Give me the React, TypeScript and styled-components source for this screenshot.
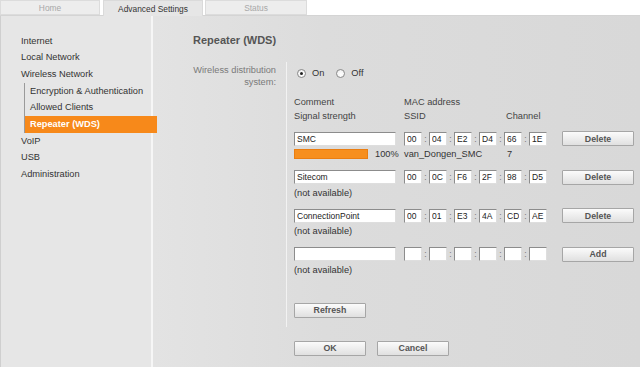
import React from 'react';
import styled, { createGlobalStyle } from 'styled-components';

const Global = createGlobalStyle`
  html, body { margin: 0; padding: 0; background: #fff; }
  body { font-family: "Liberation Sans", Arial, Helvetica, sans-serif; overflow: hidden; }
  * { box-sizing: border-box; }
`;

const Page = styled.div`
  width: 640px;
  height: 367px;
  display: flex;
  flex-direction: column;
  background: #fff;
`;

const TabBar = styled.div`
  height: 16px;
  display: flex;
  border-bottom: 1px solid #d4d4d4;
  flex-shrink: 0;
`;

const Tab = styled.div<{ $active?: boolean; $w: number; $gap: number }>`
  width: ${p => p.$w}px;
  margin-left: ${p => p.$gap}px;
  height: ${p => (p.$active ? 16 : 15)}px;
  margin-bottom: ${p => (p.$active ? -1 : 0)}px;
  display: flex;
  align-items: center;
  justify-content: center;
  font-size: 8.4px;
  color: ${p => (p.$active ? '#333' : '#a8a8a8')};
  background: ${p => (p.$active ? '#e6e6e6' : '#ededed')};
  border: 1px solid ${p => (p.$active ? '#dadada' : '#dcdcdc')};
  border-bottom: ${p => (p.$active ? 'none' : '1px solid #dcdcdc')};
  padding-top: 1px;
`;

const Body = styled.div`
  flex: 1;
  display: flex;
  min-height: 0;
`;

const Sidebar = styled.nav`
  width: 153px;
  flex-shrink: 0;
  background: #e6e6e6;
  border-left: 1px solid #cfcfcf;
  border-right: 2px solid #f6f6f6;
  padding-top: 16.6px;
  font-size: 9.25px;
  color: #333;
`;

const NavItem = styled.div`
  height: 16.7px;
  line-height: 16.7px;
  padding-left: 20px;
`;

const SubGroup = styled.div`
  margin-left: 23px;
  border-left: 1px solid #9a9a9a;
`;

const SubItem = styled.div<{ $active?: boolean }>`
  height: 16.7px;
  line-height: 16.7px;
  padding-left: 5px;
  ${p =>
    p.$active
      ? `
    position: relative;
    z-index: 1;
    margin-right: -6px;
    background: #f7891a;
    color: #fff;
    font-weight: bold;
  `
      : ''}
`;

const Main = styled.main`
  flex: 1;
  background: linear-gradient(to right, #e3e3e3 0%, #dcdcdc 35%, #d8d8d8 100%);
  padding: 17px 0 0 40px;
  font-size: 9.25px;
`;

const Title = styled.h1`
  margin: 0;
  font-size: 11px;
  line-height: 14px;
  font-weight: bold;
  color: #555;
`;

const Form = styled.div`
  display: flex;
  margin-top: 15px;
`;

const FieldLabel = styled.div`
  width: 83px;
  text-align: right;
  padding-top: 3.3px;
  line-height: 11.5px;
  color: #7a7a7a;
`;

const Content = styled.div`
  margin-left: 10px;
  border-left: 1px solid #f2f2f2;
  padding-left: 7px;
  padding-bottom: 9px;
`;

const RadioRow = styled.div`
  height: 22px;
  display: flex;
  align-items: center;
  padding-left: 3px;
  color: #333;
`;

const RadioOpt = styled.label`
  display: flex;
  align-items: center;
  gap: 6px;
  margin-right: 12px;
`;

const RadioCircle = styled.span<{ $on?: boolean }>`
  width: 9px;
  height: 9px;
  border-radius: 50%;
  border: 1px solid #8a8a8a;
  background: radial-gradient(circle at 60% 65%, #ffffff 0%, #f4f4f4 60%, #d8d8d8 100%);
  display: flex;
  align-items: center;
  justify-content: center;
  &::after {
    content: '';
    width: 3px;
    height: 3px;
    border-radius: 50%;
    background: ${p => (p.$on ? '#222' : 'transparent')};
  }
`;

const Grid = styled.div`
  display: grid;
  grid-template-columns: 110px 102px 56px 72px;
  align-items: center;
`;

const HeaderLine = styled(Grid)`
  height: 14px;
  color: #444;
`;

const Headers = styled.div`
  margin-top: 11px;
`;

const Entries = styled.div`
  margin-top: 8px;
  display: flex;
  flex-direction: column;
  gap: 8.67px;
`;

const InputLine = styled(Grid)`
  height: 15px;
`;

const InfoLine = styled(Grid)`
  height: 14px;
  margin-top: 1px;
  color: #333;
`;

const Span2 = styled.div`
  grid-column: 2 / span 2;
`;

const TextField = styled.input`
  width: 102px;
  height: 14px;
  border: 1px solid;
  border-color: #8c8c8c #dedede #dedede #8c8c8c;
  background: #fff;
  padding: 0 2px;
  font-family: inherit;
  font-size: 8.5px;
  color: #222;
  outline: none;
  display: block;
`;

const MacGroup = styled.div`
  display: flex;
  align-items: center;
`;

const MacField = styled(TextField)`
  width: 18px;
`;

const Colon = styled.span`
  width: 7px;
  text-align: center;
  color: #777;
  font-size: 8.5px;
`;

const Button = styled.button`
  width: 72px;
  height: 15px;
  padding: 0;
  border: 1px solid #a6a6a6;
  border-radius: 1px;
  background: linear-gradient(#fbfbfb, #e0e0e0);
  font-family: inherit;
  font-size: 8.8px;
  font-weight: bold;
  color: #555;
  display: block;
`;

const Signal = styled.div`
  display: flex;
  align-items: center;
`;

const Bar = styled.div`
  width: 74px;
  height: 10px;
  background: #f78f1e;
  border: 1px solid #ea7e12;
`;

const Percent = styled.span`
  margin-left: 7px;
`;

const Channel = styled.div`
  padding-left: 1px;
`;

const RefreshRow = styled.div`
  margin-top: 26px;
`;

const ActionRow = styled.div`
  display: flex;
  gap: 11px;
  margin: 14px 0 0 101px;
`;

type Entry = {
  comment: string;
  mac: string[];
  signal?: number;
  ssid?: string;
  channel?: string;
  action: string;
};

const entries: Entry[] = [
  { comment: 'SMC', mac: ['00', '04', 'E2', 'D4', '66', '1E'], signal: 100, ssid: 'van_Dongen_SMC', channel: '7', action: 'Delete' },
  { comment: 'Sitecom', mac: ['00', '0C', 'F6', '2F', '98', 'D5'], action: 'Delete' },
  { comment: 'ConnectionPoint', mac: ['00', '01', 'E3', '4A', 'CD', 'AE'], action: 'Delete' },
  { comment: '', mac: ['', '', '', '', '', ''], action: 'Add' },
];

function MacInputs({ mac }: { mac: string[] }) {
  return (
    <MacGroup>
      {mac.map((m, i) => (
        <React.Fragment key={i}>
          {i > 0 && <Colon>:</Colon>}
          <MacField defaultValue={m} />
        </React.Fragment>
      ))}
    </MacGroup>
  );
}

export default function App() {
  return (
    <Page>
      <Global />
      <TabBar>
        <Tab $w={100} $gap={0}>Home</Tab>
        <Tab $w={100} $gap={3} $active>Advanced Settings</Tab>
        <Tab $w={102} $gap={2}>Status</Tab>
      </TabBar>
      <Body>
        <Sidebar>
          <NavItem>Internet</NavItem>
          <NavItem>Local Network</NavItem>
          <NavItem>Wireless Network</NavItem>
          <SubGroup>
            <SubItem>Encryption &amp; Authentication</SubItem>
            <SubItem>Allowed Clients</SubItem>
            <SubItem $active>Repeater (WDS)</SubItem>
          </SubGroup>
          <NavItem>VoIP</NavItem>
          <NavItem>USB</NavItem>
          <NavItem>Administration</NavItem>
        </Sidebar>
        <Main>
          <Title>Repeater (WDS)</Title>
          <Form>
            <FieldLabel>
              Wireless distribution
              <br />
              system:
            </FieldLabel>
            <Content>
              <RadioRow>
                <RadioOpt>
                  <RadioCircle $on />
                  On
                </RadioOpt>
                <RadioOpt>
                  <RadioCircle />
                  Off
                </RadioOpt>
              </RadioRow>
              <Headers>
                <HeaderLine>
                  <div>Comment</div>
                  <Span2>MAC address</Span2>
                </HeaderLine>
                <HeaderLine>
                  <div>Signal strength</div>
                  <div>SSID</div>
                  <div>Channel</div>
                </HeaderLine>
              </Headers>
              <Entries>
                {entries.map((e, i) => (
                  <div key={i}>
                    <InputLine>
                      <TextField defaultValue={e.comment} />
                      <Span2>
                        <MacInputs mac={e.mac} />
                      </Span2>
                      <Button>{e.action}</Button>
                    </InputLine>
                    <InfoLine>
                      {e.signal !== undefined ? (
                        <Signal>
                          <Bar style={{ width: `${(74 * e.signal) / 100}px` }} />
                          <Percent>{e.signal}%</Percent>
                        </Signal>
                      ) : (
                        <div>(not available)</div>
                      )}
                      <div>{e.ssid ?? ''}</div>
                      <Channel>{e.channel ?? ''}</Channel>
                    </InfoLine>
                  </div>
                ))}
              </Entries>
              <RefreshRow>
                <Button>Refresh</Button>
              </RefreshRow>
            </Content>
          </Form>
          <ActionRow>
            <Button>OK</Button>
            <Button>Cancel</Button>
          </ActionRow>
        </Main>
      </Body>
    </Page>
  );
}
